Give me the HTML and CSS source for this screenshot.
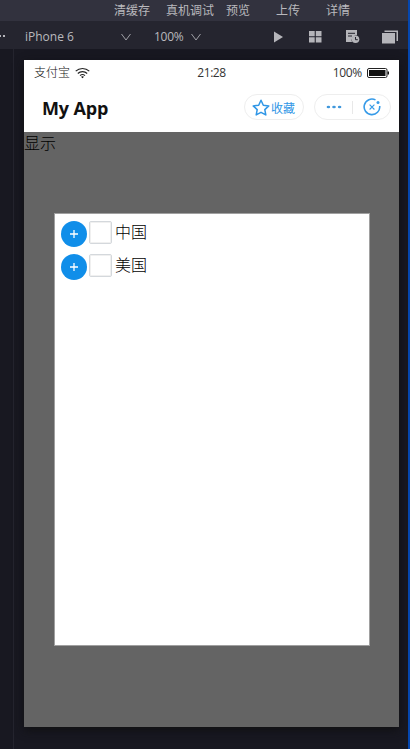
FILE: index.html
```
<!DOCTYPE html>
<html lang="zh-CN">
<head>
<meta charset="utf-8">
<title>My App</title>
<link rel="stylesheet" href="styles.css">
</head>
<body>
<div class="ide">
  <header class="menu">
    <span class="m1">清缓存</span><span class="m2">真机调试</span><span class="m3">预览</span><span class="m4">上传</span><span class="m5">详情</span>
  </header>
  <div class="toolbar">
    <svg class="dots" width="6" height="4" viewBox="0 0 6 4"><path d="M0 0h1v2H0zM3 0h2v2H3z" fill="#b5b5ba"/></svg>
    <span class="device">iPhone 6</span>
    <svg class="chev" width="10" height="8" viewBox="0 0 10 8"><path d="M.5 1 5 7 9.500 1"/></svg>
    <span class="scale">100%</span>
    <svg class="chev" width="10" height="8" viewBox="0 0 10 8"><path d="M.5 1 5 7 9.500 1"/></svg>
    <svg class="play" width="9" height="12" viewBox="0 0 9 12"><path d="M0 0.500 9 6 0 11.500z"/></svg>
    <svg class="tiles" width="13" height="12" viewBox="0 0 13 12"><path d="M0 0h5.700v5.300H0zM6.800 0h5.700v5.300H6.800zM0 6.300h5.700v5.200H0zM6.800 6.300h5.700v5.200H6.800z"/></svg>
    <svg class="log" width="14" height="14" viewBox="0 0 14 14"><path d="M0 0h11v5.300a5 5 0 0 0-5 6.700H0z"/><path d="M2 3.300h7M2 6h4" stroke="#25252f" fill="none"/><circle cx="9.500" cy="9.300" r="3.800"/><path d="M9.500 7v2.700h2.300" stroke="#25252f" fill="none"/></svg>
    <svg class="windows" width="16" height="14" viewBox="0 0 16 14"><path d="M0 3h13v10.500H0zM2.500 0.500H16V11h-1.500V2h-12z"/></svg>
  </div>
  <main class="work">
    <div class="gutter"></div>
    <section class="phone">
      <div class="status">
        <div class="carrier">支付宝<svg width="15" height="12" viewBox="0 0 15 12" fill="none" stroke="#222" stroke-width="1.100"><path d="M.7 4.200a9.800 9.800 0 0 1 13.600 0M2.800 6.500a6.800 6.800 0 0 1 9.400 0M5 8.600a3.700 3.700 0 0 1 5 0"/><path d="m6 9.800 1.500 1.500L9 9.800q-1.500-1-3 0z" fill="#111" stroke="none"/></svg></div>
        <div class="time">21:28</div>
        <div class="power">100%<svg width="22" height="10" viewBox="0 0 22 10"><rect x=".5" y=".5" width="19.500" height="9" rx="1.500" fill="none" stroke="#222"/><path d="M2 2h16.500v6H2zM20.500 3.500H22v3h-1.500z" fill="#111"/></svg></div>
      </div>
      <div class="nav">
        <h1>My App</h1>
        <div class="fav"><svg width="18" height="17" viewBox="0 0 18 17"><path d="m9 1.300 2.300 4.900 5.500.7-4 3.700 1 5.300L9 13.300l-4.800 2.600 1-5.300-4-3.700 5.500-.7z" fill="none" stroke="#2f96e6" stroke-width="1.500" stroke-linejoin="round"/></svg><span>收藏</span></div>
        <div class="capsule">
          <svg width="16" height="4" viewBox="0 0 16 4" fill="#4098dc"><ellipse cx="2.400" cy="2" rx="1.800" ry="1.200"/><ellipse cx="8" cy="2" rx="1.800" ry="1.200"/><ellipse cx="13.600" cy="2" rx="1.800" ry="1.200"/></svg>
          <i></i>
          <svg width="18" height="18" viewBox="0 0 18 18" fill="none" stroke="#379be8"><path d="M12.500 1.900A7.800 7.800 0 1 0 16.700 8" stroke-width="1.600"/><path d="m6.600 6.700 4.800 4.800m0-4.800-4.800 4.800" stroke-width="1.100"/><circle cx="15" cy="4.500" r="1.500" fill="#379be8" stroke="none"/></svg>
        </div>
      </div>
      <div class="page">
        <div class="show">显示</div>
        <div class="dialog">
          <div class="row"><span class="plus"><svg width="8" height="8" viewBox="0 0 8 8"><path d="M4 0v8M0 4h8"/></svg></span><span class="box"></span><span>中国</span></div>
          <div class="row"><span class="plus"><svg width="8" height="8" viewBox="0 0 8 8"><path d="M4 0v8M0 4h8"/></svg></span><span class="box"></span><span>美国</span></div>
        </div>
      </div>
    </section>
  </main>
</div>
</body>
</html>
```
FILE: styles.css
```
* { box-sizing: border-box; }
body { margin: 0; font-family: "Open Sans", "Noto Sans CJK SC", sans-serif; }
svg { display: block; flex: none; }
.ide { width: 410px; height: 749px; overflow: hidden; background: #181821; border-right: 2px solid #0547af; }
.menu { display: flex; height: 21px; padding-left: 114px; background: #32323e; color: #b9b9bd; font-size: 12px; line-height: 21px; white-space: nowrap; }
.m2 { margin-left: 16px; }
.m3 { margin-left: 12px; }
.m4 { margin-left: 26px; }
.m5 { margin-left: 26px; }
.toolbar { display: flex; align-items: center; height: 28px; background: #25252f; color: #b9b9bd; font-size: 12px; padding-top: 3px; }
.toolbar svg { fill: #b5b5ba; }
.toolbar .chev { fill: none; stroke: #a0a0a6; }
.toolbar span { height: 20px; line-height: 19px; }
.device { width: 96px; margin-left: 19px; }
.scale { width: 37px; margin-left: 23px; letter-spacing: -.25px; }
.play { margin-left: 73px; }
.tiles { margin-left: 26px; }
.log { margin-left: 24px; }
.windows { margin-left: 22px; }
.work { display: flex; height: 700px; }
.gutter { width: 14px; border-right: 1px solid #24242e; }
.phone { width: 375px; height: 667px; margin: 11px 0 0 10px; background: #fff; box-shadow: 0 3px 9px #101012; }
.status { display: grid; grid-template-columns: 1fr 1fr 1fr; height: 22px; padding: 3px 10px 0; color: #333; font-size: 12px; line-height: 20px; }
.carrier { font-weight: 300; color: #111; }
.carrier, .power { display: flex; align-items: center; gap: 5px; height: 20px; }
.carrier svg, .power svg { margin-top: -1px; }
.time { text-align: center; letter-spacing: -.45px; }
.power { justify-content: flex-end; letter-spacing: -.3px; }
.nav { display: flex; align-items: center; height: 50px; padding-left: 18px; padding-bottom: 3px; }
.nav h1 { width: 202px; margin: 5px 0 0; font: 700 18px/26px "Open Sans", sans-serif; letter-spacing: -.15px; color: #111; }
.fav { display: flex; align-items: center; gap: 1px; width: 60px; height: 26px; padding-left: 7px; border: 1px solid #eee; border-radius: 13px; color: #2f96e6; font-size: 12px; margin-top: 3px; white-space: nowrap; }
.fav span { margin-top: 2px; }
.capsule { display: flex; align-items: center; width: 77px; height: 26px; margin: 3px 0 0 10px; padding-left: 11px; border: 1px solid #eee; border-radius: 13px; }
.capsule i { width: 1px; height: 13px; margin: 0 10px; background: #e8e8e8; }
.page { height: 595px; background: #646464; color: #000; font-size: 16px; font-family: "Noto Sans CJK SC", sans-serif; font-weight: 300; }
.show { height: 24px; line-height: 20px; color: #000; }
.dialog { width: 316px; height: 433px; margin: 57px 0 0 30px; padding: 6px; border: 1px solid #a0a0a0; background: #fff; }
.row { display: flex; align-items: center; height: 33px; line-height: 24px; }
.row > span:last-child { margin: -11px 0 0 3px; }
.plus { display: flex; align-items: center; justify-content: center; width: 26px; height: 26px; margin-top: -6px; padding-top: 1px; border-radius: 50%; background: #108ee9; }
.plus svg { fill: none; stroke: #fff; stroke-width: 1.300; }
.box { width: 23px; height: 23px; margin: -8px 0 0 2px; border: 1px solid #d4d8dc; border-radius: 2px; box-shadow: inset 0 0 0 1px #f0f0f0; }
```
